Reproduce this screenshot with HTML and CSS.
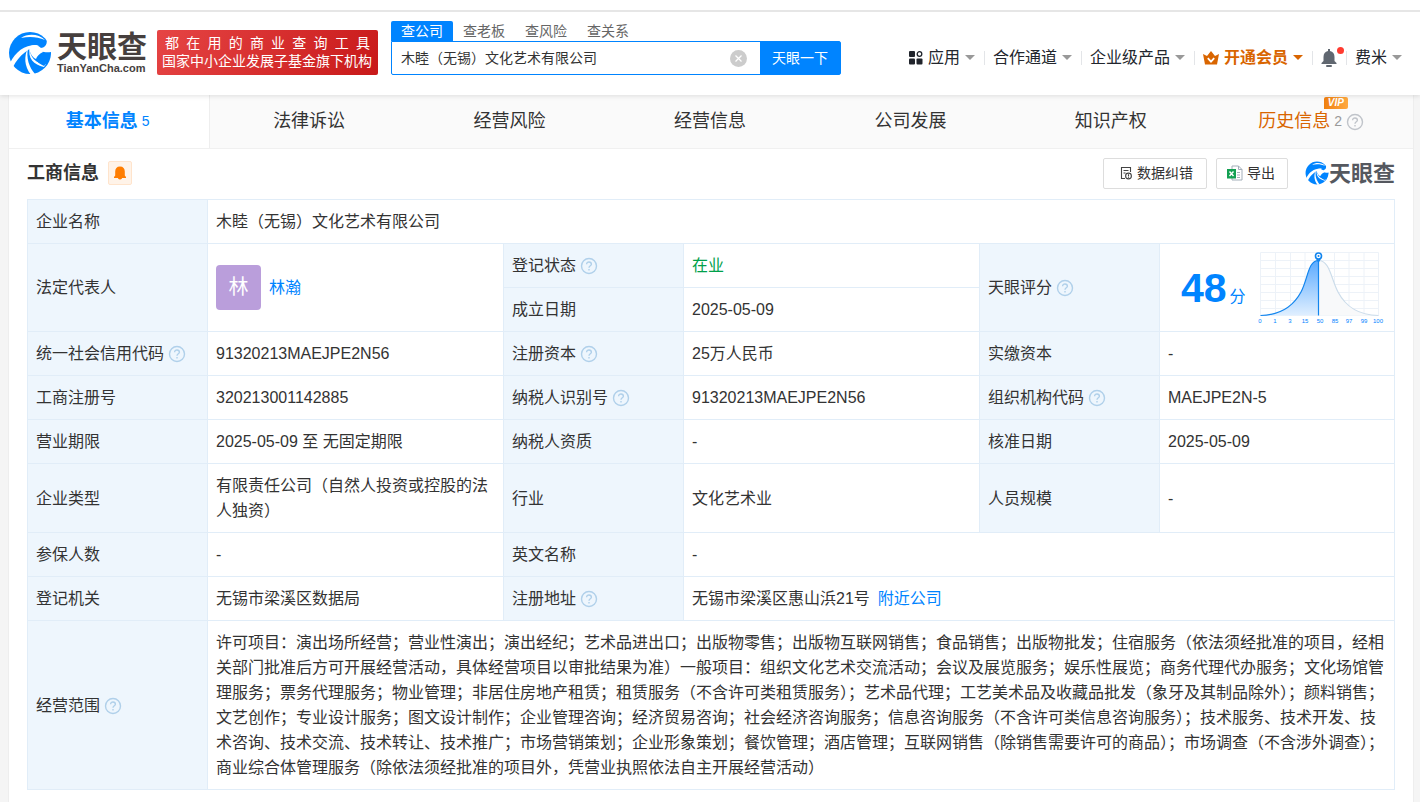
FILE: index.html
```html
<!DOCTYPE html>
<html lang="zh-CN">
<head>
  <meta charset="UTF-8">
  <meta name="viewport" content="width=device-width, initial-scale=1.0">
  <title>木睦（无锡）文化艺术有限公司 - 天眼查</title>
  <link rel="stylesheet" href="styles.css">
</head>
<body>
<svg class="defs" width="0" height="0" aria-hidden="true">
  <symbol id="swirl" viewBox="0 0 44 44">
    <circle cx="22" cy="22" r="21" fill="#0084ff"/>
    <path d="M38 6L44 5V22L43 21C38 22 31 21 28 16C35 19 41 15 38 6Z" fill="#fff"/>
    <path d="M13 7C20 2 31 3 37 9C30 6 22 5 13 7Z" fill="#fff"/>
    <path d="M2 32C8 20 17 13 31 14C21 17 11 24 5 36Z" fill="#fff"/>
    <path d="M20 17C18 27 21 36 27 43L23 44C16 35 16 25 20 17Z" fill="#fff"/>
    <path d="M22 16C21 26 28 33 38 33L36 36C26 34 19 27 22 16Z" fill="#fff"/>
    <path d="M21 17C24 13 29 13 33 17L35 21C31 23 29 25 28 28C24 26 22 22 21 17Z" fill="#fff"/>
    <path d="M43 21C42 27 39 33 36 35C32 33 29 31 27 28C32 29 38 27 43 21Z" fill="#0084ff"/>
  </symbol>
  <symbol id="help" viewBox="0 0 18 18">
    <circle cx="9" cy="9" r="7.5" fill="none" stroke="currentColor" stroke-width="1.4"/>
    <path d="M6.6 7.2C6.6 4.2 11.4 4.3 11.4 7.2C11.4 8.8 9 8.8 9 10.8M9 12V13.4" fill="none" stroke="currentColor" stroke-width="1.4"/>
  </symbol>
</svg>

<header class="header">
  <a class="logo" href="#">
    <svg class="logo-mark"><use href="#swirl"/></svg>
    <span class="logo-words">
      <span class="logo-cn">天眼查</span>
      <span class="logo-en">TianYanCha.com</span>
    </span>
  </a>
  <div class="slogan">
    <div class="slogan-wide">都 在 用 的 商 业 查 询 工 具</div>
    <div>国家中小企业发展子基金旗下机构</div>
  </div>
  <form class="search">
    <div class="search-tabs">
      <a class="on" href="#">查公司</a>
      <a href="#">查老板</a>
      <a href="#">查风险</a>
      <a href="#">查关系</a>
    </div>
    <div class="search-box">
      <input type="text" aria-label="搜索公司" value="木睦（无锡）文化艺术有限公司">
      <button class="clear" type="button" aria-label="清空">
        <svg width="17" height="17" viewBox="0 0 17 17"><circle cx="8.5" cy="8.5" r="8.5" fill="#ccc"/><path d="M5.5 5.5L11.5 11.5M11.5 5.5L5.5 11.5" stroke="#fff" stroke-width="1.3"/></svg>
      </button>
      <button class="go" type="button">天眼一下</button>
    </div>
  </form>
  <nav class="nav">
    <a href="#">
      <svg width="14" height="14" viewBox="0 0 14 14" fill="#20242b"><rect width="6" height="6" rx="1"/><rect y="7.5" width="6" height="6" rx="1"/><rect x="7.5" y="7.5" width="6" height="6" rx="1"/><circle cx="10.5" cy="3" r="2.3" fill="none" stroke="#20242b" stroke-width="1.3"/></svg>
      应用<i class="caret"></i>
    </a>
    <a href="#">合作通道<i class="caret"></i></a>
    <a href="#">企业级产品<i class="caret"></i></a>
    <a class="vip" href="#">
      <svg width="16" height="14" viewBox="0 0 16 14"><path d="M0 3L4 5L8 0L12 5L16 3L14 13.5H2Z" fill="#d96500"/><path d="M4.8 7.2L8 10.6L11.2 7.2" fill="none" stroke="#fff" stroke-width="1.8"/></svg>
      开通会员<i class="caret"></i>
    </a>
    <a class="bell" href="#" aria-label="消息">
      <svg width="16" height="18" viewBox="0 0 16 18" fill="#606770"><path d="M7 0H9V2C12 2.5 13.5 5 13.5 8V12L15.5 14V15H.5V14L2.5 12V8C2.5 5 4 2.5 7 2Z"/><rect x="5" y="16" width="6" height="2" rx="1"/></svg>
      <i class="dot"></i>
    </a>
    <a href="#">费米<i class="caret"></i></a>
  </nav>
</header>

<main class="card">
  <nav class="tabs">
    <a class="on" href="#">基本信息 <small>5</small></a>
    <a href="#">法律诉讼</a>
    <a href="#">经营风险</a>
    <a href="#">经营信息</a>
    <a href="#">公司发展</a>
    <a href="#">知识产权</a>
    <a class="history" href="#">历史信息 <small>2</small><svg class="help"><use href="#help"/></svg><b class="vip-tag">VIP</b></a>
  </nav>

  <section class="info">
    <div class="info-head">
      <h2>工商信息</h2>
      <button class="remind" type="button" aria-label="监控提醒">
        <svg width="12" height="14" viewBox="0 0 12 14" fill="#ff7d00"><path d="M6 .5C9.2 .5 10.8 2.5 10.8 5.5V9.5L12 11V12H0V11L1.2 9.5V5.5C1.2 2.5 2.8 .5 6 .5Z"/><path d="M4 11H8V12.5Q6 14.5 4 12.5Z"/></svg>
      </button>
      <div class="actions">
        <button type="button">
          <svg width="14" height="14" viewBox="0 0 14 14" fill="none" stroke="#444" stroke-width="1.1"><path d="M6 12.5H2.5V1.5H11.5V6M4.5 4.5H9.5M4.5 7H6.5"/><circle cx="9.5" cy="10" r="2.9"/><path d="M9.5 8.2V10.2M9.5 10.8V11.8"/></svg>
          数据纠错
        </button>
        <button type="button">
          <svg width="16" height="16" viewBox="0 0 16 16"><path d="M5 1H11.5L15 4.5V15H5Z" fill="#fff" stroke="#a4afba"/><path d="M11.5 1V4.5H15M10 7.5H13M10 10H13M10 12.5H13" fill="none" stroke="#a4afba"/><rect y="4" width="9" height="9.5" fill="#13a052"/><path d="M2.5 6.5L6.5 11M6.5 6.5L2.5 11" stroke="#fff" stroke-width="1.4"/></svg>
          导出
        </button>
        <span class="brand"><svg><use href="#swirl"/></svg>天眼查</span>
      </div>
    </div>

    <table>
      <colgroup>
        <col class="c-label"><col>
        <col class="c-label"><col>
        <col class="c-label"><col class="c-last">
      </colgroup>
      <tr>
        <th>企业名称</th>
        <td colspan="5">木睦（无锡）文化艺术有限公司</td>
      </tr>
      <tr>
        <th rowspan="2">法定代表人</th>
        <td rowspan="2"><div class="person"><span class="avatar">林</span><a href="#">林瀚</a></div></td>
        <th>登记状态<svg class="help"><use href="#help"/></svg></th>
        <td class="open">在业</td>
        <th rowspan="2">天眼评分<svg class="help"><use href="#help"/></svg></th>
        <td rowspan="2" class="score-cell">
          <div class="score">
            <div><b>48</b>分</div>
            <svg width="130" height="80" viewBox="0 0 130 80">
              <defs>
                <linearGradient id="fill" x1="0" y1="0" x2="0" y2="1"><stop offset="0" stop-color="#5aaaff"/><stop offset="1" stop-color="#e0efff"/></linearGradient>
              </defs>
              <path d="M5.5 4.5H123.5V67.5H5.5ZM5.5 12.5H123.5M5.5 20.5H123.5M5.5 28.5H123.5M5.5 36.5H123.5M5.5 44.5H123.5M5.5 52.5H123.5M5.5 60.5H123.5M20.5 4.5V67.5M35.5 4.5V67.5M50 4.5V67.5M64.5 4.5V67.5M79.5 4.5V67.5M94 4.5V67.5M109 4.5V67.5" fill="none" stroke="#edf2f8"/>
              <path d="M63.5 12.5C75 12.5 76 31 83 44C91 59 103 67 123.5 67.5H63.5Z" fill="#f8f9fa"/>
              <path d="M63.5 12.5C75 12.5 76 31 83 44C91 59 103 67 123.5 67.5" fill="none" stroke="#cbdcea" stroke-width="1.2"/>
              <path d="M5.5 67.5C26 67 39 57 46 44C53 31 53 12.5 63.5 12.5V67.5Z" fill="url(#fill)"/>
              <path d="M5.5 67.5C26 67 39 57 46 44C53 31 53 12.5 63.5 12.5V67.5" fill="none" stroke="#1285ee" stroke-width="1.2"/>
              <path d="M60 9L63.5 15L67 9Z" fill="#1285ee"/>
              <circle cx="63.5" cy="8" r="3" fill="#fff" stroke="#1285ee" stroke-width="1.6"/>
              <circle cx="63.5" cy="8" r="1" fill="#1285ee"/>
              <g class="ticks"><text x="5" y="75">0</text><text x="20" y="75">1</text><text x="35" y="75">3</text><text x="50" y="75">15</text><text x="65" y="75">50</text><text x="80" y="75">85</text><text x="94" y="75">97</text><text x="109" y="75">99</text><text x="123" y="75">100</text></g>
            </svg>
          </div>
        </td>
      </tr>
      <tr>
        <th>成立日期</th>
        <td>2025-05-09</td>
      </tr>
      <tr>
        <th>统一社会信用代码<svg class="help"><use href="#help"/></svg></th>
        <td>91320213MAEJPE2N56</td>
        <th>注册资本<svg class="help"><use href="#help"/></svg></th>
        <td>25万人民币</td>
        <th>实缴资本</th>
        <td>-</td>
      </tr>
      <tr>
        <th>工商注册号</th>
        <td>320213001142885</td>
        <th>纳税人识别号<svg class="help"><use href="#help"/></svg></th>
        <td>91320213MAEJPE2N56</td>
        <th>组织机构代码<svg class="help"><use href="#help"/></svg></th>
        <td>MAEJPE2N-5</td>
      </tr>
      <tr>
        <th>营业期限</th>
        <td>2025-05-09 至 无固定期限</td>
        <th>纳税人资质</th>
        <td>-</td>
        <th>核准日期</th>
        <td>2025-05-09</td>
      </tr>
      <tr>
        <th>企业类型</th>
        <td>有限责任公司（自然人投资或控股的法人独资）</td>
        <th>行业</th>
        <td>文化艺术业</td>
        <th>人员规模</th>
        <td>-</td>
      </tr>
      <tr>
        <th>参保人数</th>
        <td>-</td>
        <th>英文名称</th>
        <td colspan="3">-</td>
      </tr>
      <tr>
        <th>登记机关</th>
        <td>无锡市梁溪区数据局</td>
        <th>注册地址<svg class="help"><use href="#help"/></svg></th>
        <td colspan="3">无锡市梁溪区惠山浜21号<a class="nearby" href="#">附近公司</a></td>
      </tr>
      <tr>
        <th>经营范围<svg class="help"><use href="#help"/></svg></th>
        <td colspan="5">许可项目：演出场所经营；营业性演出；演出经纪；艺术品进出口；出版物零售；出版物互联网销售；食品销售；出版物批发；住宿服务（依法须经批准的项目，经相关部门批准后方可开展经营活动，具体经营项目以审批结果为准）一般项目：组织文化艺术交流活动；会议及展览服务；娱乐性展览；商务代理代办服务；文化场馆管理服务；票务代理服务；物业管理；非居住房地产租赁；租赁服务（不含许可类租赁服务）；艺术品代理；工艺美术品及收藏品批发（象牙及其制品除外）；颜料销售；文艺创作；专业设计服务；图文设计制作；企业管理咨询；经济贸易咨询；社会经济咨询服务；信息咨询服务（不含许可类信息咨询服务）；技术服务、技术开发、技术咨询、技术交流、技术转让、技术推广；市场营销策划；企业形象策划；餐饮管理；酒店管理；互联网销售（除销售需要许可的商品）；市场调查（不含涉外调查）；商业综合体管理服务（除依法须经批准的项目外，凭营业执照依法自主开展经营活动）</td>
      </tr>
    </table>
  </section>
</main>
</body>
</html>
```
FILE: styles.css
```css
* { box-sizing: border-box; }
body {
  margin: 0;
  background: #f5f5f5;
  color: #333;
  font: 16px/25px "Liberation Sans", "Noto Sans CJK SC", sans-serif;
}
a { color: #0084ff; text-decoration: none; }
button { font: inherit; color: inherit; cursor: pointer; }
svg { flex: none; }
.defs { position: absolute; }

/* header */
.header {
  position: relative;
  z-index: 1;
  display: flex;
  align-items: center;
  height: 95px;
  padding: 10px 18px 0 8px;
  background: #fff;
  box-shadow: 0 1px 5px rgba(0,0,0,0.12);
}
.header::before {
  content: "";
  position: absolute;
  top: 10px;
  left: 0;
  right: 0;
  height: 2px;
  background: #e6e6e6;
}
.logo { display: flex; align-items: center; gap: 5px; width: 149px; color: #463f3e; }
.logo-mark { width: 44px; height: 44px; }
.logo-words { display: flex; flex-direction: column; }
.logo-cn { font-size: 30px; line-height: 30px; font-weight: bold; }
.logo-en { font-size: 11px; line-height: 12px; font-weight: bold; }
.slogan {
  width: 221px;
  height: 45px;
  padding: 4px 5px;
  border-radius: 2px;
  background: linear-gradient(120deg, #e64545, #c81919);
  color: #fff;
  font-size: 14px;
  line-height: 18px;
  white-space: nowrap;
}
.slogan-wide { padding: 0 3px; text-align-last: justify; }
.search { width: 450px; margin-left: 13px; margin-bottom: 11px; }
.search-tabs { display: flex; padding-top: 2px; }
.search-tabs a {
  width: 62px;
  color: #666;
  font-size: 14px;
  line-height: 20px;
  text-align: center;
}
.search-tabs .on { background: #0084ff; color: #fff; border-radius: 2px 2px 0 0; }
.search-box {
  display: flex;
  align-items: center;
  height: 34px;
  border: 1px solid #0084ff;
  border-radius: 0 2px 2px 2px;
}
.search-box input {
  flex: 1;
  min-width: 0;
  padding: 0 9px;
  border: 0;
  outline: 0;
  background: none;
  color: #333;
  font: inherit;
  font-size: 14px;
}
.clear { display: flex; padding: 0; margin-right: 13px; border: 0; background: none; }
.go {
  width: 80px;
  height: 32px;
  padding: 0;
  border: 0;
  background: #0084ff;
  color: #fff;
  font-size: 14px;
}
.nav { display: flex; align-items: center; margin-left: auto; padding-top: 10px; white-space: nowrap; }
.nav a { position: relative; display: flex; align-items: center; gap: 5px; padding: 0 9px; color: #22262d; line-height: 24px; }
.nav a + a::before {
  content: "";
  position: absolute;
  left: 0;
  height: 14px;
  border-left: 1px solid #e3e5e8;
}
.nav a:last-child { padding-right: 0; }
.caret { border: 5px solid transparent; border-top-color: #999; border-bottom: 0; }
.nav .vip { color: #d96500; font-weight: bold; }
.vip .caret { border-top-color: #d96500; }
.dot {
  position: absolute;
  top: -2px;
  right: 2px;
  width: 7px;
  height: 7px;
  border-radius: 50%;
  background: #ff3b30;
}

/* card and tabs */
.card { margin: 0 6px 0 8px; background: #fff; border: solid #eee; border-width: 0 1px; }
.tabs { display: flex; background: #fafafa; border-bottom: 1px solid #f0f0f0; }
.tabs a {
  position: relative;
  flex: 1;
  display: flex;
  align-items: center;
  justify-content: center;
  gap: 4px;
  height: 53px;
  padding-right: 3px;
  color: #333;
  font-size: 18px;
}
.tabs small { font-size: 14px; }
.tabs .on { background: #fff; color: #0084ff; font-weight: bold; border-right: 1px solid #eee; }
.tabs .on small { font-weight: normal; }
.tabs .history { color: #d96500; }
.history small { color: #999; }
.history .help { margin: 0; color: #c0c4ca; }
.vip-tag {
  position: absolute;
  top: 2px;
  right: 65px;
  padding: 0 4px;
  border-radius: 2px 2px 2px 0;
  background: linear-gradient(90deg, #f08010, #ffa940);
  color: #fff;
  font-size: 10px;
  font-style: italic;
  line-height: 12px;
}

/* section head */
.info { padding: 10px 18px 12px; }
.info-head { display: flex; align-items: center; height: 40px; padding-bottom: 12px; }
h2 { margin: 0; font-size: 18px; line-height: 24px; }
.remind {
  display: flex;
  align-items: center;
  justify-content: center;
  width: 24px;
  height: 24px;
  margin-left: 9px;
  padding: 0;
  border: 1px solid #ffe4cc;
  border-radius: 2px;
  background: #fff3e8;
}
.actions { display: flex; align-items: center; gap: 9px; margin-left: auto; }
.actions button {
  display: flex;
  align-items: center;
  gap: 4px;
  height: 31px;
  padding: 0 13px 0 15px;
  border: 1px solid #ddd;
  border-radius: 2px;
  background: #fff;
  font-size: 14px;
}
.actions button + button { padding: 0 12px 0 10px; }
.brand { display: flex; align-items: center; margin-left: 8px; color: #55585f; font-size: 22px; font-weight: bold; }
.brand svg { width: 24px; height: 24px; }

/* company table */
table { width: 100%; border-collapse: collapse; table-layout: fixed; }
.c-label { width: 180px; }
.c-last { width: 235px; }
th, td { padding: 9px 8px; border: 1px solid #e1edf8; text-align: left; font-weight: normal; }
th { background: #eef6fd; }
.help { width: 18px; height: 18px; margin-left: 4px; color: #b0d0ea; vertical-align: -4px; }
.person { display: flex; align-items: center; gap: 8px; }
.avatar {
  width: 45px;
  border-radius: 4px;
  background: #ba9edb;
  color: #fff;
  font-size: 20px;
  line-height: 45px;
  text-align: center;
}
.open { color: #00a04a; }
.nearby { margin-left: 8px; }
td.score-cell { padding: 0 9px 0 21px; }
.score { display: flex; align-items: center; justify-content: space-between; color: #0084ff; white-space: nowrap; }
.score b { margin-right: 3px; font-size: 41px; line-height: 44px; }
.ticks { fill: #0084ff; font-size: 6px; text-anchor: middle; }
```
